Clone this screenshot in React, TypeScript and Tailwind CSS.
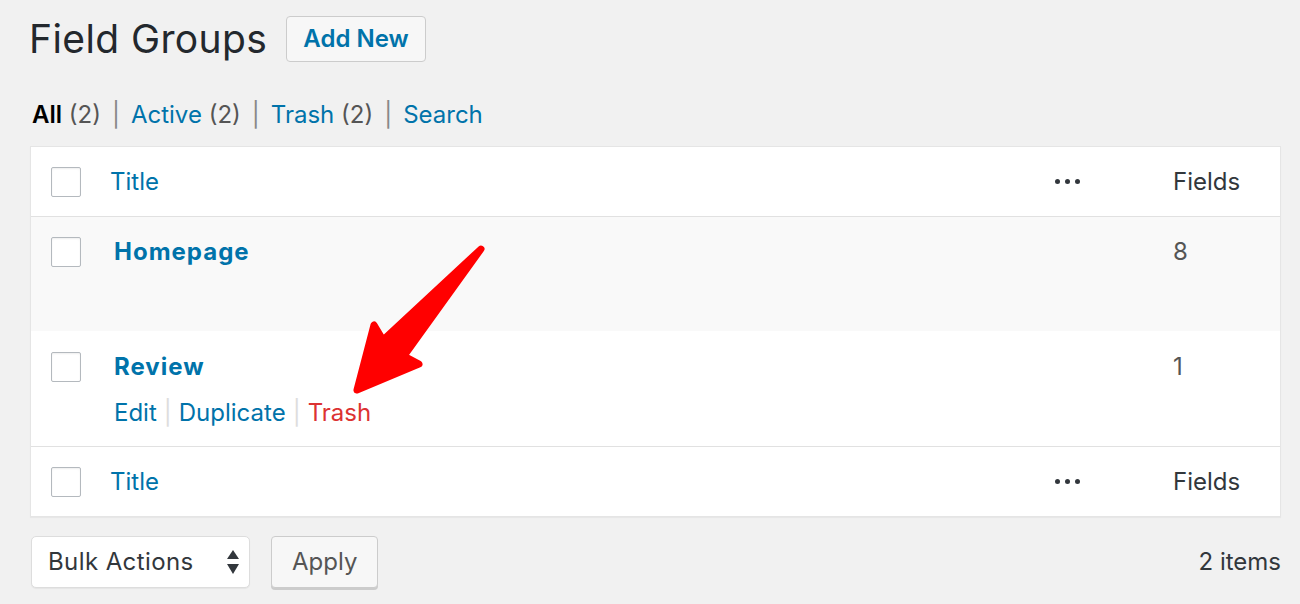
import React from 'react';

const Checkbox = () => (
  <div className="w-[30px] h-[30px] shrink-0 bg-white border-[1.5px] border-[#b4b9be] rounded-[2px] shadow-[inset_0_1px_2px_rgba(0,0,0,0.07)]" />
);

const Dots = () => (
  <div className="flex gap-[5px] items-center">
    <span className="w-[5px] h-[5px] rounded-full bg-[#32373c]" />
    <span className="w-[5px] h-[5px] rounded-full bg-[#32373c]" />
    <span className="w-[5px] h-[5px] rounded-full bg-[#32373c]" />
  </div>
);

const HeadRow = ({ last }: { last?: boolean }) => (
  <div className={`flex items-center h-[70px] pl-[20px] ${last ? 'border-t border-[#e1e1e1]' : 'border-b border-[#e1e1e1]'}`}>
    <Checkbox />
    <a className="ml-[29px] text-[#0073aa]">Title</a>
    <div className="ml-auto w-[118px]">
      <Dots />
    </div>
    <div className="w-[107px] text-[#32373c]">Fields</div>
  </div>
);

const App = () => {
  return (
    <div className="relative min-h-screen bg-[#f1f1f1] pl-[30px] pr-[19px] pt-[16px] font-['Inter',sans-serif] text-[24px] leading-[30px] text-[#32373c]">
      {/* Heading */}
      <div className="flex items-center h-[46px]">
        <h1 className="-ml-[1px] text-[39px] tracking-[0.4px] text-[#23282d] font-normal">Field Groups</h1>
        <button className="ml-[19px] h-[46px] px-[16px] bg-[#f7f7f7] border border-[#cccccc] rounded-[4px] text-[#0073aa] font-semibold">
          Add New
        </button>
      </div>

      {/* Filters */}
      <div className="mt-[38px] pl-[2px] flex items-center gap-[11px]">
        <span>
          <span className="font-semibold text-black">All</span> <span className="text-[#555]">(2)</span>
        </span>
        <span className="text-[#888]">|</span>
        <span>
          <a className="text-[#0073aa]">Active</a> <span className="text-[#555]">(2)</span>
        </span>
        <span className="text-[#888]">|</span>
        <span>
          <a className="text-[#0073aa]">Trash</a> <span className="text-[#555]">(2)</span>
        </span>
        <span className="text-[#888]">|</span>
        <a className="text-[#0073aa]">Search</a>
      </div>

      {/* Table */}
      <div className="mt-[16px] bg-white border border-[#e5e5e5] shadow-[0_1px_1px_rgba(0,0,0,0.04)]">
        <HeadRow />

        <div className="flex items-start h-[114px] pt-[20px] pl-[20px] bg-[#f9f9f9]">
          <Checkbox />
          <a className="ml-[33px] font-bold tracking-[1px] text-[#0073aa]">Homepage</a>
          <div className="ml-auto w-[107px] text-[#555]">8</div>
        </div>

        <div className="flex items-start h-[115px] pt-[21px] pl-[20px]">
          <Checkbox />
          <div className="ml-[33px] flex flex-col">
            <a className="font-bold tracking-[1px] text-[#0073aa]">Review</a>
            <div className="mt-[16px] flex items-center gap-[7px]">
              <a className="text-[#0073aa]">Edit</a>
              <span className="text-[#ddd]">|</span>
              <a className="text-[#0073aa]">Duplicate</a>
              <span className="text-[#ddd]">|</span>
              <a className="text-[#dc3232]">Trash</a>
            </div>
          </div>
          <div className="ml-auto w-[107px] text-[#555]">1</div>
        </div>

        <HeadRow last />
      </div>

      {/* Bottom bar */}
      <div className="mt-[19px] flex items-center">
        <div className="ml-[1px] w-[219px] h-[52px] flex items-center justify-between pl-[16px] pr-[10px] bg-white border border-[#dddddd] rounded-[5px] shadow-[0_1px_1px_rgba(0,0,0,0.05)]">
          <span className="tracking-[0.4px]">Bulk Actions</span>
          <svg width="12" height="24" viewBox="0 0 12 24">
            <path d="M6 0 L12 9 L0 9 Z" fill="#32373c" />
            <path d="M0 14 L12 14 L6 24 Z" fill="#32373c" />
          </svg>
        </div>
        <button className="ml-[21px] h-[52px] px-[20px] bg-[#f7f7f7] border border-[#cccccc] rounded-[4px] shadow-[0_2px_0_#cccccc] text-[#555]">
          Apply
        </button>
        <span className="ml-auto">2 items</span>
      </div>

      {/* Annotation arrow */}
      <svg className="absolute left-[340px] top-[230px]" width="160" height="180" viewBox="0 0 160 180">
        <path
          d="M141 19 L43 110 L34 95 L17 160 L79 134 L64 126 Z"
          fill="#ff0000"
          stroke="#ff0000"
          strokeWidth="7"
          strokeLinejoin="round"
        />
      </svg>
    </div>
  );
};

export default App;
